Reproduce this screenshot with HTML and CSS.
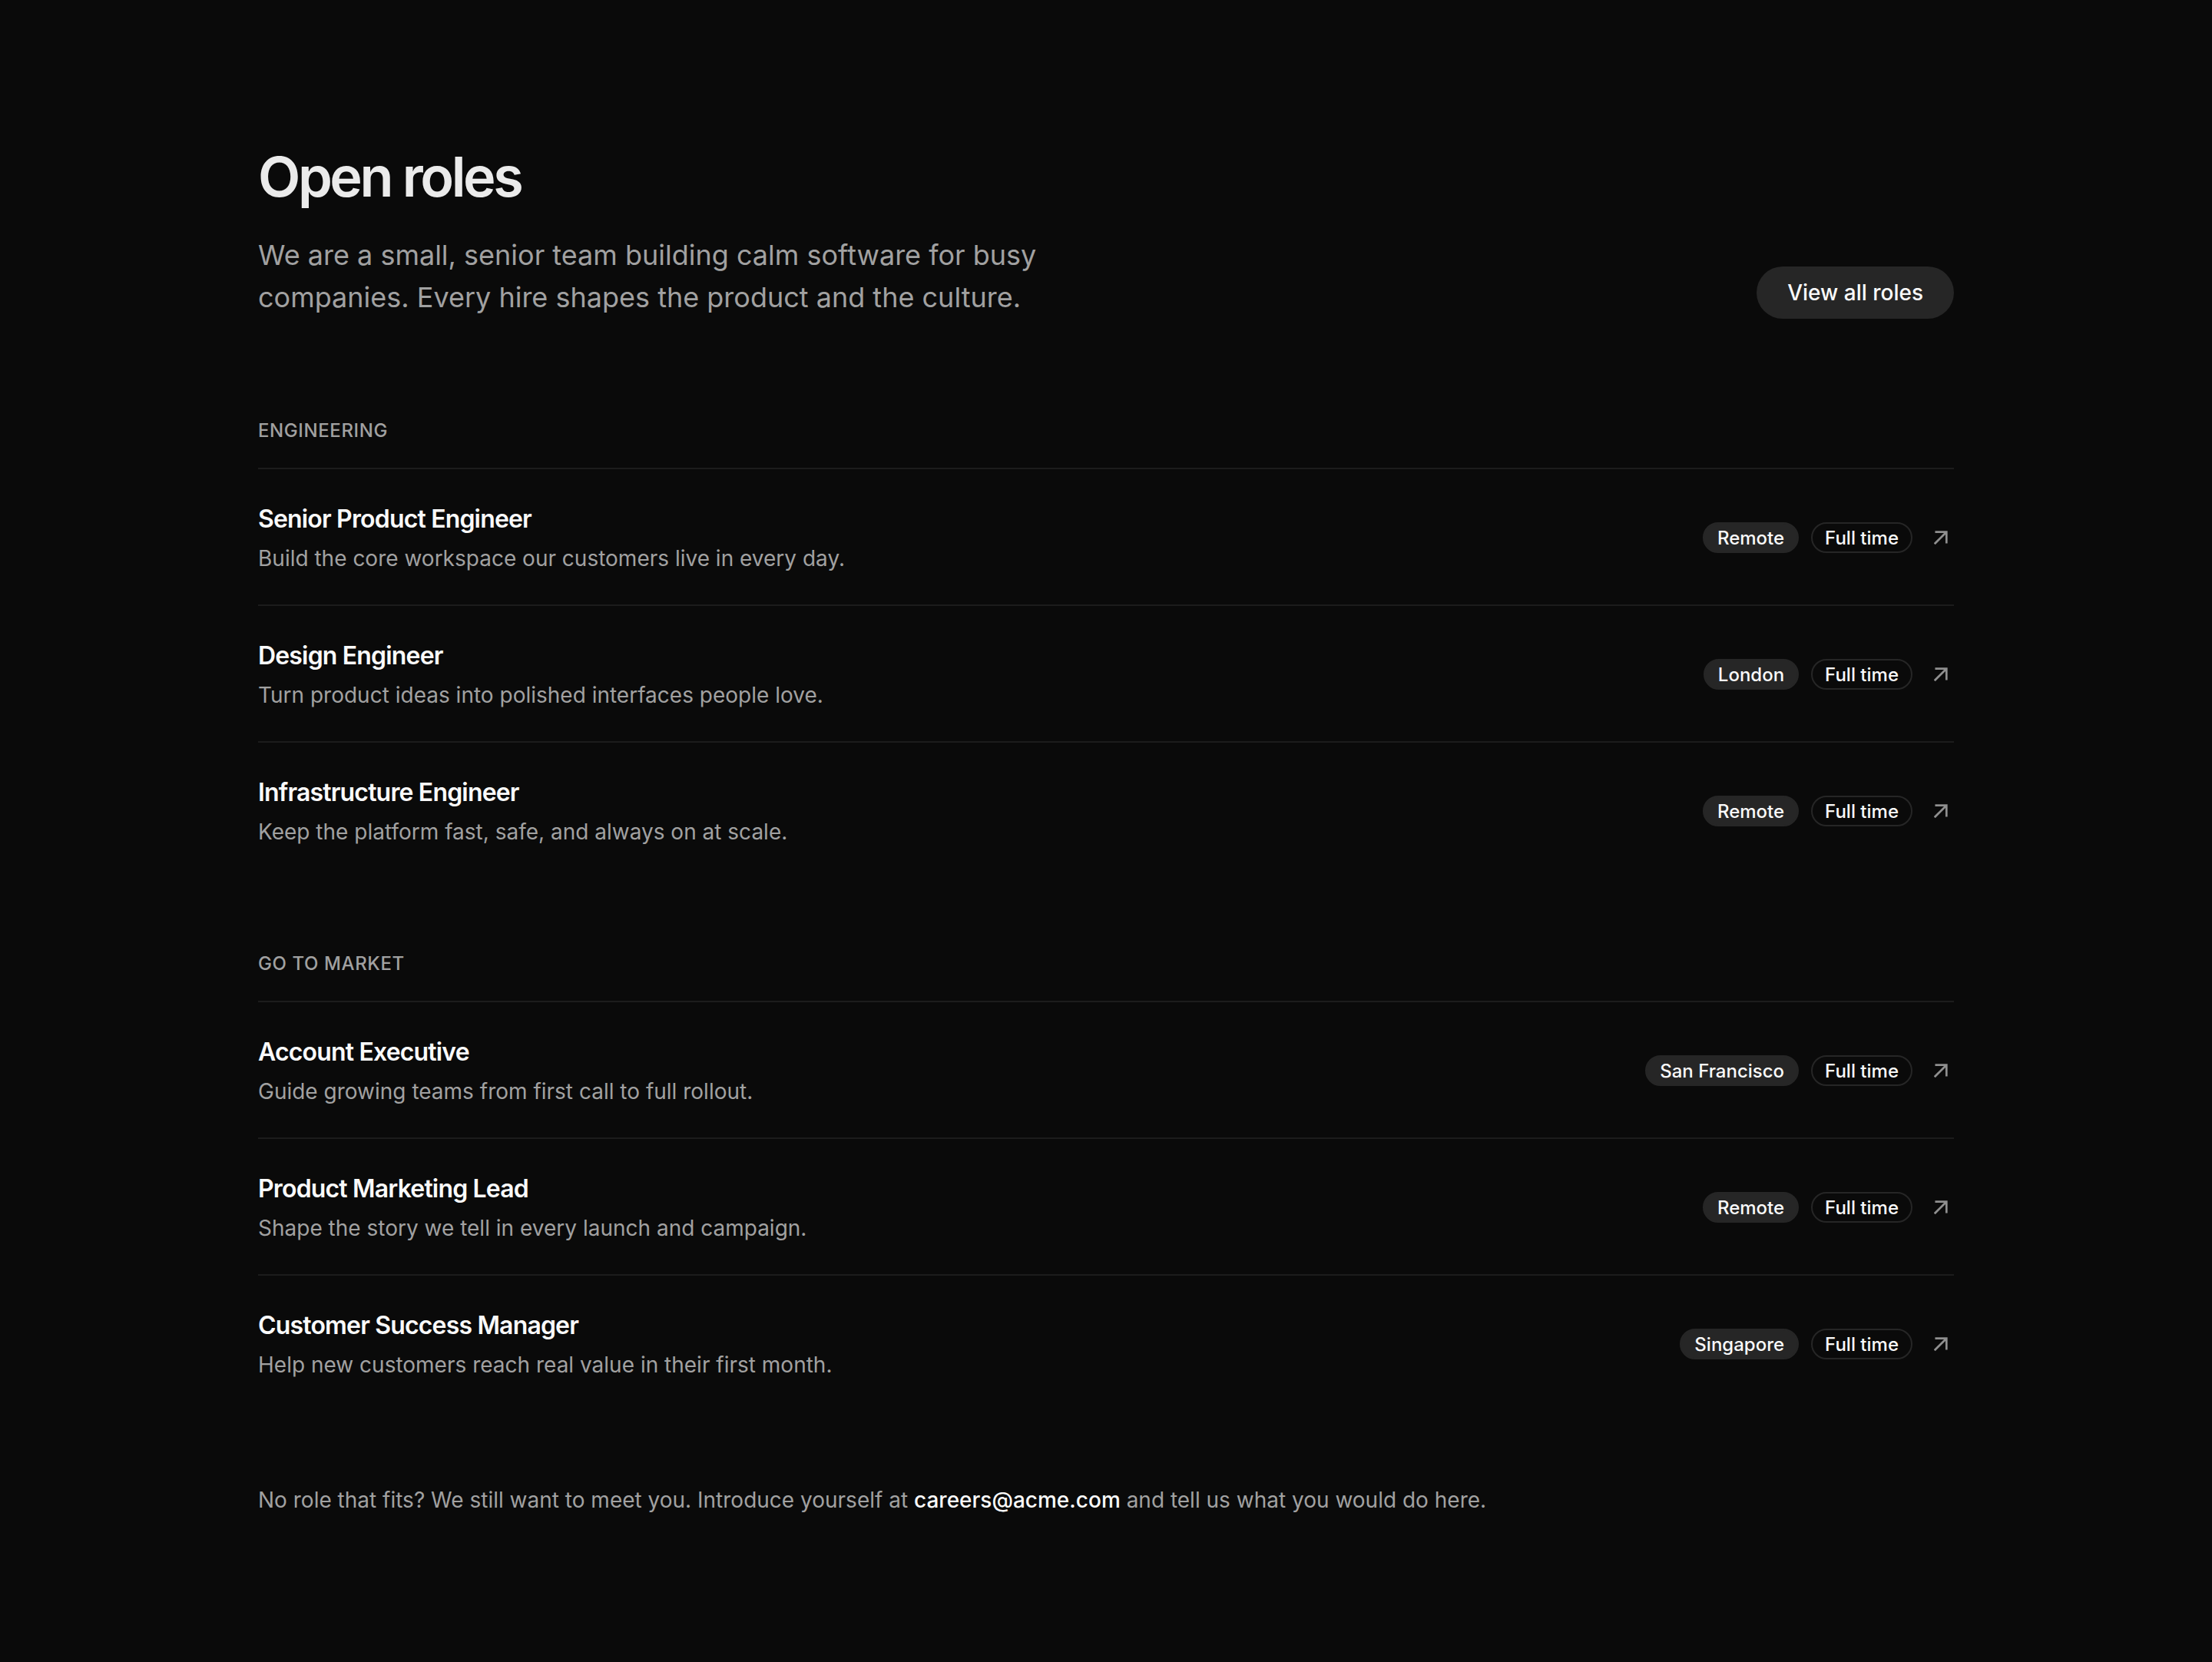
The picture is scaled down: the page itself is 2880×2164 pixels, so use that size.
FILE: index.html
```html
<!DOCTYPE html>
<html lang="en">
<head>
<meta charset="utf-8">
<title>Open roles</title>
<link rel="stylesheet" href="styles.css">
</head>
<body>
<main class="page">
  <header class="head">
    <div class="head-text">
      <h1 class="title">Open roles</h1>
      <p class="lede">We are a small, senior team building calm software for busy companies. Every hire shapes the product and the culture.</p>
    </div>
    <a class="btn" href="#">View all roles</a>
  </header>

  <section class="group">
    <h2 class="group-label">Engineering</h2>
    <ul class="roles">
      <li class="role">
        <div class="role-text">
          <div class="role-title">Senior Product Engineer</div>
          <div class="role-desc">Build the core workspace our customers live in every day.</div>
        </div>
        <div class="role-meta">
          <span class="tag tag-fill">Remote</span>
          <span class="tag tag-line">Full time</span>
          <svg class="arrow" viewBox="0 0 16 16" width="18" height="18" aria-hidden="true"><path d="M1.5 14.5 L14 2 M2.5 1.5 H14.5 V13.5"/></svg>
        </div>
      </li>
      <li class="role">
        <div class="role-text">
          <div class="role-title">Design Engineer</div>
          <div class="role-desc">Turn product ideas into polished interfaces people love.</div>
        </div>
        <div class="role-meta">
          <span class="tag tag-fill">London</span>
          <span class="tag tag-line">Full time</span>
          <svg class="arrow" viewBox="0 0 16 16" width="18" height="18" aria-hidden="true"><path d="M1.5 14.5 L14 2 M2.5 1.5 H14.5 V13.5"/></svg>
        </div>
      </li>
      <li class="role">
        <div class="role-text">
          <div class="role-title">Infrastructure Engineer</div>
          <div class="role-desc">Keep the platform fast, safe, and always on at scale.</div>
        </div>
        <div class="role-meta">
          <span class="tag tag-fill">Remote</span>
          <span class="tag tag-line">Full time</span>
          <svg class="arrow" viewBox="0 0 16 16" width="18" height="18" aria-hidden="true"><path d="M1.5 14.5 L14 2 M2.5 1.5 H14.5 V13.5"/></svg>
        </div>
      </li>
    </ul>
  </section>

  <section class="group">
    <h2 class="group-label">Go to market</h2>
    <ul class="roles">
      <li class="role">
        <div class="role-text">
          <div class="role-title">Account Executive</div>
          <div class="role-desc">Guide growing teams from first call to full rollout.</div>
        </div>
        <div class="role-meta">
          <span class="tag tag-fill">San Francisco</span>
          <span class="tag tag-line">Full time</span>
          <svg class="arrow" viewBox="0 0 16 16" width="18" height="18" aria-hidden="true"><path d="M1.5 14.5 L14 2 M2.5 1.5 H14.5 V13.5"/></svg>
        </div>
      </li>
      <li class="role">
        <div class="role-text">
          <div class="role-title">Product Marketing Lead</div>
          <div class="role-desc">Shape the story we tell in every launch and campaign.</div>
        </div>
        <div class="role-meta">
          <span class="tag tag-fill">Remote</span>
          <span class="tag tag-line">Full time</span>
          <svg class="arrow" viewBox="0 0 16 16" width="18" height="18" aria-hidden="true"><path d="M1.5 14.5 L14 2 M2.5 1.5 H14.5 V13.5"/></svg>
        </div>
      </li>
      <li class="role">
        <div class="role-text">
          <div class="role-title">Customer Success Manager</div>
          <div class="role-desc">Help new customers reach real value in their first month.</div>
        </div>
        <div class="role-meta">
          <span class="tag tag-fill">Singapore</span>
          <span class="tag tag-line">Full time</span>
          <svg class="arrow" viewBox="0 0 16 16" width="18" height="18" aria-hidden="true"><path d="M1.5 14.5 L14 2 M2.5 1.5 H14.5 V13.5"/></svg>
        </div>
      </li>
    </ul>
  </section>

  <p class="foot">No role that fits? We still want to meet you. Introduce yourself at <a class="mail" href="#">careers@acme.com</a> and tell us what you would do here.</p>
</main>
</body>
</html>
```

FILE: styles.css
```css
* { box-sizing: border-box; }

html, body {
  margin: 0;
  padding: 0;
  background: #0a0a0a;
}

body {
  font-family: Inter, "Noto Sans", "Liberation Sans", sans-serif;
  color: #fafafa;
  min-height: 2164px;
}

.page {
  width: 2208px;
  margin: 0 auto;
  padding: 190px 0 160px;
}

.head {
  display: flex;
  justify-content: space-between;
  align-items: flex-end;
  gap: 64px;
}

.title {
  margin: 0;
  font-size: 72px;
  line-height: 79px;
  font-weight: 600;
  letter-spacing: -0.048em;
  color: #ebebeb;
}

.lede {
  margin: 36px 0 0;
  max-width: 1080px;
  font-size: 36px;
  line-height: 55px;
  color: #a1a1a1;
}

.btn {
  display: inline-flex;
  align-items: center;
  height: 68px;
  padding: 0 40px;
  border-radius: 999px;
  background: #262626;
  color: #fafafa;
  font-size: 28px;
  font-weight: 500;
  text-decoration: none;
  white-space: nowrap;
}

.group {
  margin-top: 130px;
}

.group + .group {
  margin-top: 96px;
}

.group-label {
  margin: 0 0 32px;
  font-size: 24px;
  line-height: 32px;
  font-weight: 500;
  letter-spacing: 0.025em;
  text-transform: uppercase;
  color: #a1a1a1;
}

.roles {
  list-style: none;
  margin: 0;
  padding: 0;
}

.role {
  display: flex;
  align-items: center;
  justify-content: space-between;
  padding: 41px 0 39px;
  border-top: 2px solid #1c1c1c;
}

.role-text {
  display: flex;
  flex-direction: column;
  gap: 6px;
}

.role-title {
  font-size: 32px;
  line-height: 48px;
  font-weight: 600;
  letter-spacing: -0.026em;
  color: #fafafa;
}

.role-desc {
  font-size: 28px;
  line-height: 42px;
  color: #a1a1a1;
}

.role-meta {
  display: flex;
  align-items: center;
  gap: 16px;
}

.tag {
  display: inline-flex;
  align-items: center;
  height: 40px;
  padding: 0 17px;
  border-radius: 999px;
  font-size: 24px;
  font-weight: 500;
  color: #fafafa;
  white-space: nowrap;
}

.tag-fill {
  background: #262626;
  border: 2px solid #262626;
}

.tag-line {
  padding: 0 16px;
  border: 2px solid #262626;
}

.arrow {
  margin-left: 12px;
  margin-right: 8px;
  fill: none;
  stroke: #8f8f8f;
  stroke-width: 2.4;
  stroke-linecap: square;
}

.foot {
  margin: 94px 0 0;
  font-size: 28px;
  line-height: 44px;
  color: #a1a1a1;
}

.mail {
  color: #fafafa;
  font-weight: 500;
  text-decoration: none;
}
```
